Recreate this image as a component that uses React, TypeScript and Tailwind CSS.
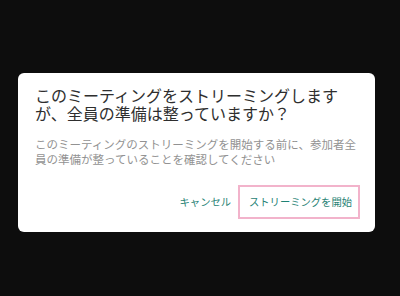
export default function App() {
  return (
    <div
      className="w-[400px] h-[296px] bg-[#0d0d0d] pt-[73px] pl-[18px]"
      style={{ fontFamily: '"Noto Sans CJK JP", "Noto Sans", sans-serif' }}
    >
      <div className="w-[357px] h-[159px] bg-white rounded-[6px] pl-[17px] pr-[3px] pt-[13px] flex flex-col">
        <div className="text-[16px] leading-[18px] font-normal text-[#2e2e2e] whitespace-nowrap">
          このミーティングをストリーミングします
          <br />
          が、全員の準備は整っていますか？
        </div>
        <div className="mt-[15px] text-[11.5px] leading-[15px] text-[#929292] whitespace-nowrap">
          このミーティングのストリーミングを開始する前に、参加者全
          <br />
          員の準備が整っていることを確認してください
        </div>
        <div className="mt-[18px] flex items-center justify-end pr-[12px] gap-[7px]">
          <button className="text-[10.3px] leading-[14px] text-[#1f8274] font-normal">
            キャンセル
          </button>
          <button className="h-[34px] pl-[9px] pr-[6px] border-2 border-[#f2b3cb] text-[10.3px] leading-[14px] text-[#1f8274] font-normal">
            ストリーミングを開始
          </button>
        </div>
      </div>
    </div>
  );
}
